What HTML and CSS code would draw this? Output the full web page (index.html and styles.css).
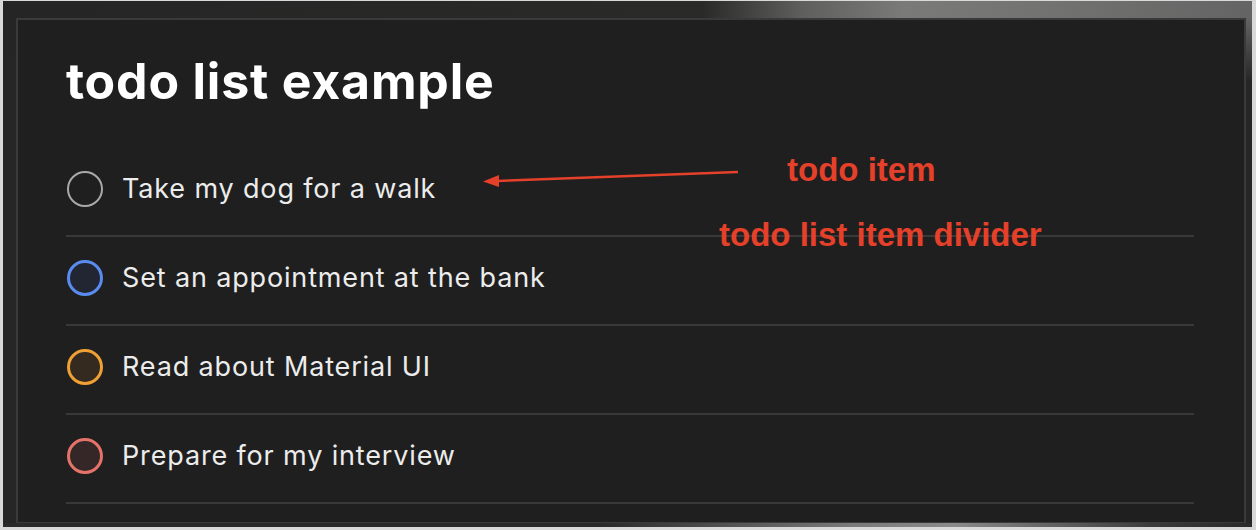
FILE: index.html
```html
<!DOCTYPE html>
<html>
<head>
<meta charset="utf-8">
<link rel="stylesheet" href="styles.css">
</head>
<body>
<div class="frame">
  <div class="panel">
    <h1 class="title">todo list example</h1>
    <ul class="todo-list">
      <li class="todo-item"><span class="check check-gray"></span><span class="label">Take my dog for a walk</span></li>
      <li class="todo-item"><span class="check check-blue"></span><span class="label">Set an appointment at the bank</span></li>
      <li class="todo-item"><span class="check check-orange"></span><span class="label">Read about Material UI</span></li>
      <li class="todo-item"><span class="check check-red"></span><span class="label">Prepare for my interview</span></li>
    </ul>
  </div>
  <svg class="arrow" width="260" height="20" viewBox="0 0 260 20">
    <line x1="255" y1="3" x2="14" y2="12" stroke="#e5402a" stroke-width="2.5"/>
    <polygon points="0,12.5 16,6 16,18" fill="#e5402a"/>
  </svg>
  <span class="note note-item">todo item</span>
  <span class="note note-divider">todo list item divider</span>
</div>
</body>
</html>
```

FILE: styles.css
```css
html, body {
  margin: 0;
  padding: 0;
}
body {
  background: #d9d9d9;
  width: 1256px;
  height: 530px;
  overflow: hidden;
  padding: 1px 4px 3px 3px;
  box-sizing: border-box;
}
.frame {
  position: relative;
  height: 526px;
  box-sizing: border-box;
  padding: 17px 6px 3px 13px;
  background:
    linear-gradient(to bottom, rgba(0,0,0,0) 0, rgba(0,0,0,0) 16px, #262626 80px),
    linear-gradient(to right, #252525 0, #2a2a29 700px, #5f5f5e 800px, #7a7a78 900px, #727271 1050px, #646464 1249px);
  background-size: 100% 100%;
}
.frame::after {
  content: "";
  position: absolute;
  left: 0;
  right: 0;
  bottom: 0;
  height: 4px;
  background: linear-gradient(to right, #2a2a2a 0, #2a2a2a 600px, #7a7a7a 850px, #8a8a8a 950px, #3a3a3a 1150px, #2a2a2a 1249px);
}
.panel {
  height: 100%;
  box-sizing: border-box;
  border: 2px solid #3a3a3a;
  background: #1f1f1f;
  padding: 0 50px 0 48px;
  font-family: Inter, "Noto Sans", sans-serif;
}
.title {
  margin: 0;
  padding: 34px 0 0 0;
  height: 91px;
  box-sizing: border-box;
  font-size: 50px;
  font-weight: 700;
  line-height: 54px;
  color: #ffffff;
  letter-spacing: 0.8px;
}
.todo-list {
  list-style: none;
  margin: 37px 0 0 0;
  padding: 0;
}
.todo-item {
  display: flex;
  align-items: center;
  gap: 19px;
  height: 89px;
  box-sizing: border-box;
  padding: 0 0 6px 1px;
  border-bottom: 2px solid #393939;
}
.check {
  width: 36px;
  height: 36px;
  box-sizing: border-box;
  border-radius: 50%;
  flex: none;
}
.check-gray {
  border: 2px solid #a9a9a9;
}
.check-blue {
  border: 3px solid #5a8cf0;
  background: #222633;
}
.check-orange {
  border: 3px solid #efa034;
  background: #342a1f;
}
.check-red {
  border: 3px solid #e4736a;
  background: #352727;
}
.label {
  font-size: 27px;
  color: #ececec;
  letter-spacing: 0.85px;
}
.arrow {
  position: absolute;
  left: 480px;
  top: 168px;
}
.note {
  position: absolute;
  font-family: "Liberation Sans", Arial, sans-serif;
  font-weight: 700;
  font-size: 33px;
  color: #e5402a;
  line-height: 1;
}
.note-item {
  left: 784px;
  top: 152px;
}
.note-divider {
  left: 716px;
  top: 217px;
}
```
